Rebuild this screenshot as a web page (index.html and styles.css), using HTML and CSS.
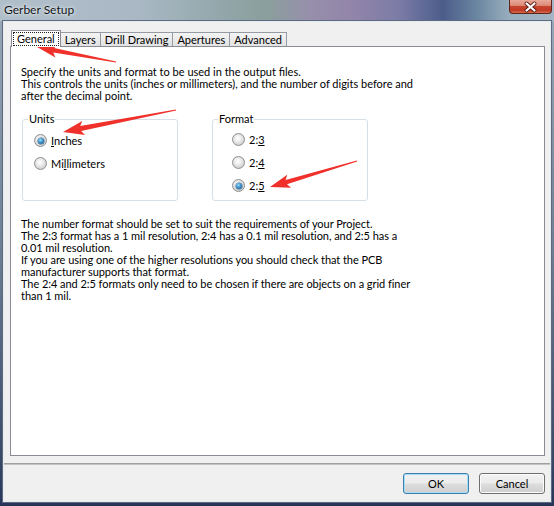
FILE: index.html
```html
<!DOCTYPE html>
<html>
<head>
<meta charset="utf-8">
<link rel="stylesheet" href="styles.css">
</head>
<body>
<div class="window">
  <div class="titlebar">
    <span class="title">Gerber Setup</span>
    <div class="close">
      <svg width="43" height="14" viewBox="0 0 43 14">
        <path d="M17.5 3.5 L25.5 10.5 M25.5 3.5 L17.5 10.5" stroke="#5a1d15" stroke-width="4" stroke-linecap="round"/>
        <path d="M17.5 3.5 L25.5 10.5 M25.5 3.5 L17.5 10.5" stroke="#ffffff" stroke-width="2.2" stroke-linecap="round"/>
      </svg>
    </div>
  </div>
  <div class="client">
    <div class="tabs">
      <div class="tab active"><span class="focus">General</span></div>
      <div class="tab">Layers</div>
      <div class="tab">Drill Drawing</div>
      <div class="tab">Apertures</div>
      <div class="tab">Advanced</div>
    </div>
    <div class="panel">
      <p class="text intro">Specify the units and format to be used in the output files.<br>This controls the units (inches or millimeters), and the number of digits before and<br>after the decimal point.</p>
      <div class="groups">
        <fieldset class="group units">
          <legend>Units</legend>
          <div class="options">
            <label class="option"><input type="radio" class="radio" name="units" checked><span><u>I</u>nches</span></label>
            <label class="option"><input type="radio" class="radio" name="units"><span>Mi<u>l</u>limeters</span></label>
          </div>
        </fieldset>
        <fieldset class="group format">
          <legend>Format</legend>
          <div class="options">
            <label class="option"><input type="radio" class="radio" name="fmt"><span>2:<u>3</u></span></label>
            <label class="option"><input type="radio" class="radio" name="fmt"><span>2:<u>4</u></span></label>
            <label class="option"><input type="radio" class="radio" name="fmt" checked><span>2:<u>5</u></span></label>
          </div>
        </fieldset>
      </div>
      <p class="text notes">The number format should be set to suit the requirements of your Project.<br>The 2:3 format has a 1 mil resolution, 2:4 has a 0.1 mil resolution, and 2:5 has a<br>0.01 mil resolution.<br>If you are using one of the higher resolutions you should check that the PCB<br>manufacturer supports that format.<br>The 2:4 and 2:5 formats only need to be chosen if there are objects on a grid finer<br>than 1 mil.</p>
    </div>
    <div class="separator"></div>
    <div class="buttons">
      <button class="btn default">OK</button>
      <button class="btn">Cancel</button>
    </div>
  </div>
  <svg class="annotations" width="554" height="506" viewBox="0 0 554 506">
    <g fill="#f0302a">
      <polygon transform="translate(116 62) rotate(-169.25)" points="0,-0.6 63.4,-2.3 60.4,-6.8 80.4,0 60.4,6.8 63.4,2.3 0,0.6"/>
      <polygon transform="translate(176 110) rotate(168.98)" points="0,-0.6 97.1,-2.5 94.1,-7.2 115.1,0 94.1,7.2 97.1,2.5 0,0.6"/>
      <polygon transform="translate(357 161) rotate(163.36)" points="0,-0.6 73.8,-2.3 70.8,-6.8 90.8,0 70.8,6.8 73.8,2.3 0,0.6"/>
    </g>
  </svg>
</div>
</body>
</html>
```
FILE: styles.css
```css
* { box-sizing: border-box; }

html, body {
  margin: 0;
  padding: 0;
}

body {
  width: 554px;
  height: 506px;
  overflow: hidden;
  font-family: Lato, "Noto Sans", sans-serif;
  font-size: 11px;
  color: #000;
}

.window {
  position: relative;
  width: 554px;
  height: 506px;
  display: flex;
  flex-direction: column;
  background: linear-gradient(180deg, #9aaab9 0%, #6d7d93 50%, #3b4a68 90%, #26345a 100%);
}

.titlebar {
  flex: none;
  height: 21px;
  display: flex;
  justify-content: space-between;
  align-items: flex-start;
  background: linear-gradient(90deg, #b0bfca 0%, #a9b8c4 25%, #93a7ab 40%, #8a9f9c 48%, #978fab 56%, #9184a9 64%, #7b7ca6 72%, #4c5c8b 80%, #6a86a0 86%, #98aebe 92%, #a4b5c4 100%);
}

.title {
  margin: 3px 0 0 4px;
  font-size: 12px;
  line-height: 14px;
  color: #101418;
  text-shadow: 0 0 5px rgba(255, 255, 255, 0.85), 0 0 2px rgba(255, 255, 255, 0.7);
}

.close {
  width: 43px;
  height: 14px;
  margin-right: 2px;
  border: 1px solid #5e2419;
  border-top: 0;
  border-radius: 0 0 4px 4px;
  background: linear-gradient(180deg, #e9a898 0%, #dc8a78 42%, #c6432d 50%, #c13b27 80%, #d7704f 100%);
  display: flex;
  align-items: center;
  justify-content: center;
}

.close svg {
  display: block;
  margin: -1px;
}

.client {
  flex: 1;
  margin: 0 3px 4px 3px;
  border: 1px solid #e6ebf0;
  outline: 1px solid #5d6b80;
  background: #f0f0f0;
  padding: 8px 5px 0 6px;
  display: flex;
  flex-direction: column;
}

.tabs {
  display: flex;
  align-items: flex-end;
  height: 17px;
  margin: 0 0 -1px 1px;
  position: relative;
  z-index: 1;
}

.tab {
  height: 14px;
  margin-bottom: 1px;
  margin-left: -1px;
  padding: 0 4px;
  border: 1px solid #959aa3;
  border-bottom: 0;
  background: linear-gradient(180deg, #f4f4f4 0%, #ebebeb 50%, #e2e2e2 100%);
  line-height: 13px;
  white-space: nowrap;
}

.tab.active {
  height: 17px;
  margin-bottom: 0;
  margin-left: 0;
  margin-right: 0;
  padding: 1px 1px 0 1px;
  background: #fff;
  border-color: #898c95;
  position: relative;
  z-index: 2;
}

.focus {
  display: block;
  height: 14px;
  padding: 0 4px;
  line-height: 13px;
  outline: 1px dotted #222;
  outline-offset: -1px;
  border: 0;
}

.panel {
  height: 410px;
  background: #fff;
  border: 1px solid #898c95;
  padding: 19px 10px 0 10px;
}

.text {
  margin: 0;
  line-height: 12px;
  white-space: nowrap;
}

.notes {
  letter-spacing: -0.05px;
}

.groups {
  display: flex;
  gap: 34px;
  margin: 11px 0 0 1px;
}

.group {
  margin: 0;
  padding: 0;
  width: 156px;
  height: 88px;
  border: 1px solid #d5dfe5;
  border-radius: 3px;
}

.group legend {
  margin-left: 5px;
  padding: 0 1px;
  line-height: 12px;
}

.options {
  display: flex;
  flex-direction: column;
  gap: 10px;
  padding-top: 9px;
}

.units .options { padding-left: 11px; }
.format .options { padding-left: 19px; gap: 10px; padding-top: 8px; }

.option {
  display: flex;
  align-items: center;
  gap: 4px;
  height: 13px;
  line-height: 13px;
}

.option u {
  text-decoration-thickness: 1px;
  text-underline-offset: 1px;
}

.radio {
  appearance: none;
  -webkit-appearance: none;
  margin: 0;
  width: 13px;
  height: 13px;
  border-radius: 50%;
  border: 1px solid #8e8f8f;
  background: radial-gradient(circle at 45% 40%, #ffffff 0%, #f0f0f0 30%, #cfcfcf 75%, #eeeeee 100%);
  position: relative;
  flex: none;
}

.radio:checked::after {
  content: "";
  position: absolute;
  left: 2.5px;
  top: 2.5px;
  width: 6px;
  height: 6px;
  border-radius: 50%;
  background: radial-gradient(circle at 40% 35%, #9fe0ff 0%, #3b8fc9 45%, #17517f 100%);
  box-shadow: 0 0 0 0.5px #2b5b80;
}

.notes {
  margin-top: 17px;
}

.separator {
  margin-top: 7px;
  height: 2px;
  border-top: 1px solid #a0a0a0;
  border-bottom: 1px solid #c4c4c4;
  margin-left: -6px;
  margin-right: -5px;
}

.buttons {
  display: flex;
  justify-content: flex-end;
  gap: 10px;
  margin-top: 8px;
  padding-right: 0;
}

.btn {
  width: 66px;
  height: 21px;
  padding: 0;
  font-family: inherit;
  font-size: 11px;
  color: #000;
  border: 1px solid #707070;
  border-radius: 3px;
  background: linear-gradient(180deg, #f3f3f3 0%, #ebebeb 48%, #dddddd 52%, #cfcfcf 100%);
  box-shadow: inset 0 0 0 1px #fcfcfc;
}

.btn.default {
  border-color: #3c7fb1;
  box-shadow: inset 0 0 0 1px #a8dcf5;
}

.annotations {
  position: absolute;
  left: 0;
  top: 0;
  pointer-events: none;
}
```
